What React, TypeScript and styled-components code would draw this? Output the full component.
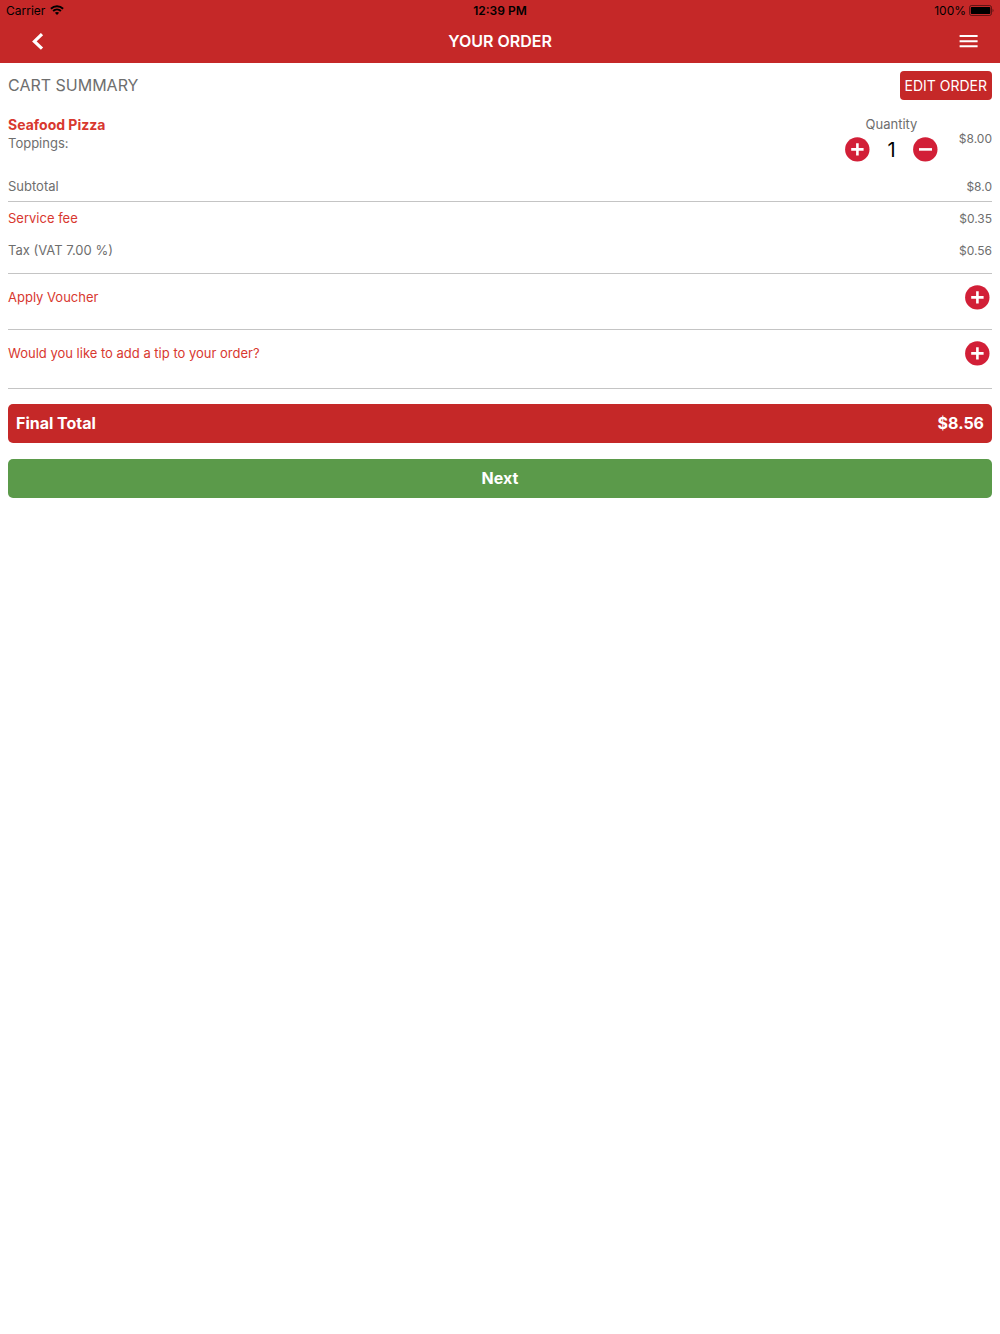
import React, { useState } from "react";
import styled, { createGlobalStyle } from "styled-components";

const color = {
  brand: "#c52828",
  accent: "#d8382f",
  round: "#d21f37",
  text: "#6e6e6e",
  line: "#c4c4c4",
  next: "#5b9a4a",
};

const GlobalStyle = createGlobalStyle`
  *, *::before, *::after { box-sizing: border-box; }
  body {
    margin: 0;
    background: #fff;
    color: ${color.text};
    font-family: Inter, Roboto, "Liberation Sans", sans-serif;
    font-size: 14px;
    line-height: 19px;
  }
  h1, h2, h3 { margin: 0; font: inherit; }
  button { margin: 0; padding: 0; border: 0; background: none; font: inherit; cursor: pointer; }
  svg { display: block; }
`;

const Header = styled.header`
  background: ${color.brand};
`;

const StatusBar = styled.div`
  display: grid;
  grid-template-columns: 1fr auto 1fr;
  align-items: center;
  height: 20px;
  padding: 0 6px;
  color: #000;
  font-size: 12px;
`;

const StatusGroup = styled.div<{ $end?: boolean }>`
  display: flex;
  align-items: center;
  justify-content: ${(p) => (p.$end ? "flex-end" : "flex-start")};
  gap: ${(p) => (p.$end ? "3px" : "5px")};
`;

const Clock = styled.time`
  font-weight: 600;
`;

const NavBar = styled.nav`
  display: grid;
  grid-template-columns: 1fr auto 1fr;
  align-items: center;
  height: 43px;
  padding: 0 20px;
  color: #fff;
`;

const Title = styled.h1`
  font-size: 16px;
  font-weight: 600;
`;

const NavButton = styled.button<{ $end?: boolean }>`
  justify-self: ${(p) => (p.$end ? "end" : "start")};
  padding: ${(p) => (p.$end ? "0" : "0 10px")};
  color: #fff;
`;

const Main = styled.main`
  padding: 8px 8px 16px;
`;

const SummaryBar = styled.div`
  display: flex;
  align-items: center;
  justify-content: space-between;
  margin-bottom: 15px;
`;

const SummaryTitle = styled.h2`
  font-size: 16px;
`;

const EditButton = styled.button`
  height: 29px;
  padding: 0 5px;
  border-radius: 4px;
  background: ${color.brand};
  color: #fff;
  font-size: 14px;
`;

const Item = styled.article`
  display: grid;
  grid-template-columns: 1fr 93px 54px;
  margin-bottom: 9px;
`;

const ItemName = styled.h3`
  color: ${color.accent};
  font-weight: 700;
`;

const Quantity = styled.div`
  text-align: center;
  font-size: 13px;
`;

const Stepper = styled.div`
  display: flex;
  align-items: center;
  justify-content: space-between;
  height: 25px;
  margin-top: 3px;
`;

const Count = styled.output`
  color: #000;
  font-size: 20px;
  line-height: 26px;
`;

const RoundButton = styled.button`
  width: 25px;
  height: 25px;
`;

const Price = styled.div`
  align-self: center;
  font-size: 12px;
  text-align: right;
`;

const Section = styled.section<{ $bottom?: number }>`
  padding-bottom: ${(p) => p.$bottom ?? 0}px;
  border-bottom: 1px solid ${color.line};
`;

const Row = styled.div<{ $height: number; $inset?: boolean }>`
  display: flex;
  align-items: center;
  justify-content: space-between;
  height: ${(p) => p.$height}px;
  padding-right: ${(p) => (p.$inset ? "2px" : "0")};
`;

const Label = styled.div<{ $accent?: boolean }>`
  color: ${(p) => (p.$accent ? color.accent : "inherit")};
  font-size: 13px;
`;

const TotalBar = styled.div`
  display: flex;
  align-items: center;
  justify-content: space-between;
  height: 39px;
  margin-top: 15px;
  padding: 0 8px;
  border-radius: 5px;
  background: ${color.brand};
  color: #fff;
  font-size: 16px;
  font-weight: 700;
`;

const NextButton = styled.button`
  width: 100%;
  height: 39px;
  margin-top: 16px;
  border-radius: 5px;
  background: ${color.next};
  color: #fff;
  font-size: 16px;
  font-weight: 700;
`;

const Wifi = () => (
  <svg width="14" height="10" viewBox="0 0 14 10" fill="none" stroke="#000" strokeWidth="1.9" aria-hidden="true">
    <path d="M0.9 3.7C4.3 0.4 9.7 0.4 13.1 3.7" />
    <path d="M3.1 6C5.3 3.9 8.7 3.9 10.9 6" />
    <path d="M7 9.9 4.9 7.7C6.1 6.7 7.9 6.7 9.1 7.7Z" fill="#000" stroke="none" />
  </svg>
);

const Battery = () => (
  <svg width="25" height="11" viewBox="0 0 25 11" aria-hidden="true">
    <rect x="0.5" y="0.5" width="22" height="10" rx="2" fill="none" stroke="#000" strokeOpacity="0.5" />
    <rect x="1.8" y="2" width="19.5" height="7" rx="0.8" fill="#000" />
    <path d="M23.6 3.8C24.8 4.3 24.8 6.7 23.6 7.2Z" fill="#000" fillOpacity="0.6" />
  </svg>
);

const Chevron = () => (
  <svg width="16" height="18" viewBox="0 0 16 18" fill="none" stroke="currentColor" strokeWidth="3.2" aria-hidden="true">
    <path d="M12 1.1 4.4 8.4 12 15.7" />
  </svg>
);

const Menu = () => (
  <svg width="22" height="18" viewBox="0 0 22 18" fill="currentColor" aria-hidden="true">
    <path d="M1.6 2h18v2h-18zM1.6 7.2h18v2h-18zM1.6 12.3h18v2h-18z" />
  </svg>
);

const Disc = ({ plus }: { plus?: boolean }) => (
  <svg width="25" height="25" viewBox="0 0 25 25" aria-hidden="true">
    <circle cx="12.3" cy="12.4" r="12.2" fill={color.round} />
    <path d={plus ? "M6.2 12.4h12.4M12.4 6.2v12.4" : "M6 12.4h13"} stroke="#fff" strokeWidth="2.6" />
  </svg>
);

const fees = [
  { name: "Service fee", amount: "$0.35", accent: true },
  { name: "Tax (VAT 7.00 %)", amount: "$0.56", accent: false },
];

const extras = [
  { name: "Apply Voucher", bottom: 9 },
  { name: "Would you like to add a tip to your order?", bottom: 12 },
];

export default function App() {
  const [count, setCount] = useState(1);

  return (
    <>
      <GlobalStyle />
      <Header>
        <StatusBar>
          <StatusGroup>
            <span>Carrier</span>
            <Wifi />
          </StatusGroup>
          <Clock>12:39 PM</Clock>
          <StatusGroup $end>
            <span>100%</span>
            <Battery />
          </StatusGroup>
        </StatusBar>
        <NavBar>
          <NavButton aria-label="Back">
            <Chevron />
          </NavButton>
          <Title>YOUR ORDER</Title>
          <NavButton $end aria-label="Menu">
            <Menu />
          </NavButton>
        </NavBar>
      </Header>
      <Main>
        <SummaryBar>
          <SummaryTitle>CART SUMMARY</SummaryTitle>
          <EditButton>EDIT ORDER</EditButton>
        </SummaryBar>
        <Item>
          <div>
            <ItemName>Seafood Pizza</ItemName>
            <Label>Toppings:</Label>
          </div>
          <Quantity>
            Quantity
            <Stepper>
              <RoundButton aria-label="Increase quantity" onClick={() => setCount(count + 1)}>
                <Disc plus />
              </RoundButton>
              <Count>{count}</Count>
              <RoundButton aria-label="Decrease quantity" onClick={() => setCount(Math.max(1, count - 1))}>
                <Disc />
              </RoundButton>
            </Stepper>
          </Quantity>
          <Price>$8.00</Price>
        </Item>
        <Section>
          <Row $height={30}>
            <Label>Subtotal</Label>
            <Price>$8.0</Price>
          </Row>
        </Section>
        <Section $bottom={7}>
          {fees.map((fee) => (
            <Row key={fee.name} $height={32}>
              <Label $accent={fee.accent}>{fee.name}</Label>
              <Price>{fee.amount}</Price>
            </Row>
          ))}
        </Section>
        {extras.map((extra) => (
          <Section key={extra.name} $bottom={extra.bottom}>
            <Row $height={46} $inset>
              <Label $accent>{extra.name}</Label>
              <RoundButton aria-label={extra.name}>
                <Disc plus />
              </RoundButton>
            </Row>
          </Section>
        ))}
        <TotalBar>
          <span>Final Total</span>
          <span>$8.56</span>
        </TotalBar>
        <NextButton>Next</NextButton>
      </Main>
    </>
  );
}
